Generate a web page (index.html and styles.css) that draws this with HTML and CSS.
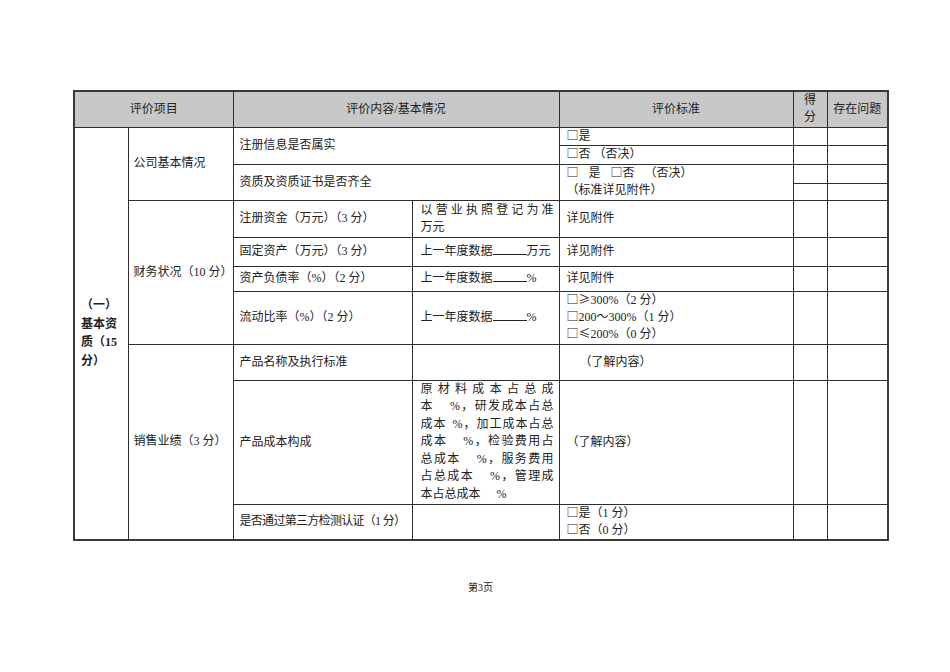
FILE: index.html
```html
<!DOCTYPE html>
<html lang="zh-CN">
<head>
<meta charset="utf-8">
<title>评价表 第3页</title>
<link rel="stylesheet" href="styles.css">
</head>
<body>
<div class="page">
  <table class="sheet">
    <colgroup>
      <col class="c1"><col class="c2"><col class="c3"><col class="c4"><col class="c5"><col class="c6"><col class="c7">
    </colgroup>
    <thead>
      <tr class="r-head">
        <th colspan="2">评价项目</th>
        <th colspan="2">评价内容/基本情况</th>
        <th>评价标准</th>
        <th class="score-h">得<br>分</th>
        <th>存在问题</th>
      </tr>
    </thead>
    <tbody>
      <tr class="r-a">
        <td rowspan="11" class="group">（一）基本资质（15分）</td>
        <td rowspan="4" class="sub">公司基本情况</td>
        <td colspan="2" rowspan="2">注册信息是否属实</td>
        <td class="std"><span class="box">□</span>是</td>
        <td></td><td></td>
      </tr>
      <tr class="r-b">
        <td class="std"><span class="box">□</span>否 （否决）</td>
        <td></td><td></td>
      </tr>
      <tr class="r-c">
        <td colspan="2" rowspan="2">资质及资质证书是否齐全</td>
        <td rowspan="2" class="std"><span class="ln"><span class="box">□</span><span class="sp"></span>是<span class="sp"></span><span class="box">□</span>否<span class="sp"></span>（否决）</span><span class="ln">（标准详见附件）</span></td>
        <td></td><td></td>
      </tr>
      <tr class="r-d">
        <td></td><td></td>
      </tr>
      <tr class="r-e">
        <td rowspan="4" class="sub">财务状况（10 分）</td>
        <td>注册资金（万元）（3 分）</td>
        <td class="data"><span class="jl">以营业执照登记为准</span><span class="ln">万元</span></td>
        <td class="std">详见附件</td>
        <td></td><td></td>
      </tr>
      <tr class="r-f">
        <td>固定资产（万元）（3 分）</td>
        <td class="data">上一年度数据<span class="blank"></span>万元</td>
        <td class="std">详见附件</td>
        <td></td><td></td>
      </tr>
      <tr class="r-g">
        <td>资产负债率（%）（2 分）</td>
        <td class="data">上一年度数据<span class="blank"></span>%</td>
        <td class="std">详见附件</td>
        <td></td><td></td>
      </tr>
      <tr class="r-h">
        <td>流动比率（%）（2 分）</td>
        <td class="data">上一年度数据<span class="blank"></span>%</td>
        <td class="std"><span class="ln"><span class="box">□≥</span>300%（2 分）</span><span class="ln"><span class="box">□</span>200～300%（1 分）</span><span class="ln"><span class="box">□≤</span>200%（0 分）</span></td>
        <td></td><td></td>
      </tr>
      <tr class="r-i">
        <td rowspan="3" class="sub">销售业绩（3 分）</td>
        <td>产品名称及执行标准</td>
        <td class="data"></td>
        <td class="std indent">（了解内容）</td>
        <td></td><td></td>
      </tr>
      <tr class="r-j">
        <td>产品成本构成</td>
        <td class="data cost">
          <span class="jl">原材料成本占总成</span>
          <span class="jl">本<span class="gap"></span>%，研发成本占总</span>
          <span class="jl">成本<span class="gap gap-s"></span>%，加工成本占总</span>
          <span class="jl">成本<span class="gap"></span>%，检验费用占</span>
          <span class="jl">总成本<span class="gap"></span>%，服务费用</span>
          <span class="jl">占总成本<span class="gap"></span>%，管理成</span>
          <span class="ln">本占总成本<span class="gap"></span>%</span>
        </td>
        <td class="std">（了解内容）</td>
        <td></td><td></td>
      </tr>
      <tr class="r-k">
        <td class="tight">是否通过第三方检测认证（1 分）</td>
        <td class="data"></td>
        <td class="std"><span class="ln"><span class="box">□</span>是（1 分）</span><span class="ln"><span class="box">□</span>否（0 分）</span></td>
        <td></td><td></td>
      </tr>
    </tbody>
  </table>
  <div class="footer">第3页</div>
</div>
</body>
</html>
```

FILE: styles.css
```css
html, body {
  margin: 0;
  padding: 0;
  background: #ffffff;
}

body {
  font-family: "Liberation Serif", "Noto Sans CJK SC", serif;
  color: #222222;
  font-size: 12px;
}

.page {
  width: 815px;
  margin-left: 73px;
  padding-top: 90px;
}

.sheet {
  width: 815px;
  table-layout: fixed;
  border-collapse: collapse;
  border: 2px solid #3a3a3a;
}

.c1 { width: 54px; }
.c2 { width: 105px; }
.c3 { width: 179px; }
.c4 { width: 147px; }
.c5 { width: 234px; }
.c6 { width: 34px; }
.c7 { width: 61px; }

.sheet th,
.sheet td {
  border: 1px solid #2e2e2e;
  padding: 0 6px;
  line-height: 17px;
  vertical-align: middle;
  text-align: left;
  font-weight: normal;
}

.sheet th {
  background: #c8c8c8;
  text-align: center;
  padding: 0;
}

.sheet th.score-h {
  line-height: 17px;
}

.r-head { height: 36px; }
.r-a { height: 18px; }
.r-b { height: 19px; }
.r-c { height: 19px; }
.r-d { height: 17px; }
.r-e { height: 37px; }
.r-f { height: 29px; }
.r-g { height: 25px; }
.r-h { height: 53px; }
.r-i { height: 36px; }
.r-j { height: 124px; }
.r-k { height: 35px; }

.sheet td.group {
  font-weight: bold;
  padding: 0 5px 0 6px;
  line-height: 18.5px;
  word-break: break-all;
}

.sheet td.sub {
  padding-left: 5px;
}

.sheet td.tight {
  white-space: nowrap;
  letter-spacing: -0.7px;
}

.sheet td.data {
  padding: 0 5px 0 8px;
}

.sheet td.std {
  padding: 0 6px 0 7px;
}

.sheet td.indent {
  padding-left: 20px;
}

.sheet td.cost {
  line-height: 17.4px;
}

.box {
  font-family: "Noto Sans CJK SC", sans-serif;
  line-height: 12px;
}

.sp {
  display: inline-block;
  width: 10px;
}

.jl {
  display: block;
  text-align: justify;
  text-align-last: justify;
}

.ln {
  display: block;
}

.blank {
  display: inline-block;
  width: 34px;
  height: 10px;
  border-bottom: 1px solid #222222;
  vertical-align: baseline;
}

.gap {
  display: inline-block;
  width: 16px;
}

.gap-s {
  width: 6px;
}

.footer {
  text-align: center;
  font-size: 10px;
  margin-top: 38px;
  color: #222222;
}
```
